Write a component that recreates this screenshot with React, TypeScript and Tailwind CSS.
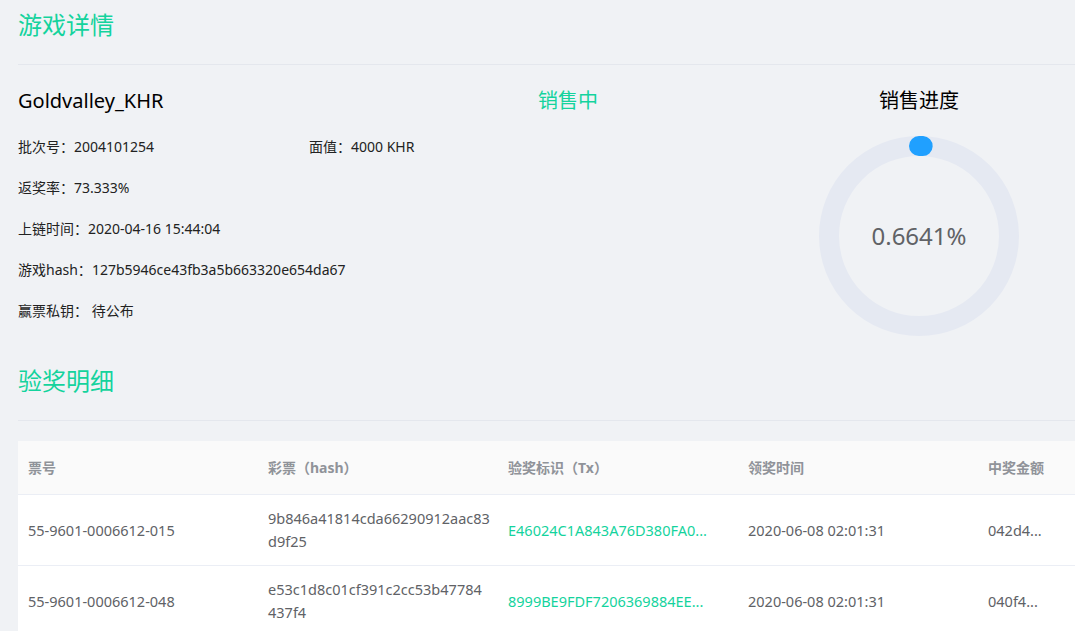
import React from "react";

const GREEN = "text-[#14d39d]";

const fields = [
  { label: "返奖率：", value: "73.333%" },
  { label: "上链时间：", value: "2020-04-16 15:44:04" },
  { label: "游戏hash：", value: "127b5946ce43fb3a5b663320e654da67" },
  { label: "赢票私钥：", value: " 待公布" },
];

// hash shown on two lines, as the table wraps it
const rows = [
  {
    no: "55-9601-0006612-015",
    hash: ["9b846a41814cda66290912aac83", "d9f25"],
    tx: "E46024C1A843A76D380FA0...",
    time: "2020-06-08 02:01:31",
    amount: "042d4...",
  },
  {
    no: "55-9601-0006612-048",
    hash: ["e53c1d8c01cf391c2cc53b47784", "437f4"],
    tx: "8999BE9FDF7206369884EE...",
    time: "2020-06-08 02:01:31",
    amount: "040f4...",
  },
];

const headers = ["票号", "彩票（hash）", "验奖标识（Tx）", "领奖时间", "中奖金额"];

function ProgressRing({ percent }: { percent: number }) {
  const r = 90;
  const c = 2 * Math.PI * r;
  const len = (percent / 100) * c;
  return (
    <div className="relative w-[200px] h-[200px]">
      <svg width="200" height="200" viewBox="0 0 200 200">
        <circle cx="100" cy="100" r={r} fill="none" stroke="#e5e9f2" strokeWidth="20" />
        <circle
          cx="100"
          cy="100"
          r={r}
          fill="none"
          stroke="#20a0ff"
          strokeWidth="20"
          strokeLinecap="round"
          strokeDasharray={`${len} ${c}`}
          transform="rotate(-90 100 100)"
        />
      </svg>
      <div className="absolute inset-0 flex items-center justify-center text-[24px] text-[#606266]">
        {percent}%
      </div>
    </div>
  );
}

export default function App() {
  return (
    <div
      className="w-[1075px] h-[631px] overflow-hidden bg-[#f0f2f5]"
      style={{ fontFamily: '"Noto Sans", "Noto Sans CJK SC", sans-serif' }}
    >
      <div className="w-[1240px] pl-[18px]">
        {/* 游戏详情 */}
        <div className="pt-[10px] pb-[24px] border-b border-[#e4e7ed]">
          <h2 className={`text-[24px] leading-[30px] ${GREEN}`}>游戏详情</h2>
        </div>

        <div className="flex mt-[22px]">
          <div className="w-[520px]">
            <div className="text-[20px] leading-[28px] text-black">Goldvalley_KHR</div>
            <div className="flex flex-col gap-[21px] mt-[22px] text-[14px] leading-[20px] text-[#222]">
              <div className="flex">
                <span className="w-[291px]">批次号：2004101254</span>
                <span>面值：4000 KHR</span>
              </div>
              {fields.map((f) => (
                <div key={f.label} className="whitespace-pre">
                  {f.label}
                  {f.value}
                </div>
              ))}
            </div>
          </div>
          <div className="w-[281px]">
            <div className={`text-[20px] leading-[28px] ${GREEN}`}>销售中</div>
          </div>
          <div className="w-[200px] flex flex-col items-center">
            <div className="text-[20px] leading-[28px] text-black">销售进度</div>
            <div className="mt-[21px]">
              <ProgressRing percent={0.6641} />
            </div>
          </div>
        </div>

        {/* 验奖明细 */}
        <div className="mt-[30px] pb-[24px] border-b border-[#e4e7ed]">
          <h2 className={`text-[24px] leading-[30px] ${GREEN}`}>验奖明细</h2>
        </div>

        <div className="mt-[20px] w-[1200px] bg-white">
          <div className="flex h-[54px] items-center bg-[#fafafa] border-b border-[#ebeef5]">
            {headers.map((h) => (
              <div key={h} className="w-[240px] px-[10px] text-[14px] font-bold text-[#909399]">
                {h}
              </div>
            ))}
          </div>
          {rows.map((r) => (
            <div
              key={r.no}
              className="flex items-center border-b border-[#ebeef5] py-[12px] text-[14.5px] leading-[23px] text-[#606266]"
            >
              <div className="w-[240px] px-[10px]">{r.no}</div>
              <div className="w-[240px] px-[10px]">
                <div>{r.hash[0]}</div>
                <div>{r.hash[1]}</div>
              </div>
              <div className={`w-[240px] px-[10px] whitespace-nowrap ${GREEN}`}>{r.tx}</div>
              <div className="w-[240px] px-[10px]">{r.time}</div>
              <div className="w-[240px] px-[10px]">{r.amount}</div>
            </div>
          ))}
        </div>
      </div>
    </div>
  );
}
